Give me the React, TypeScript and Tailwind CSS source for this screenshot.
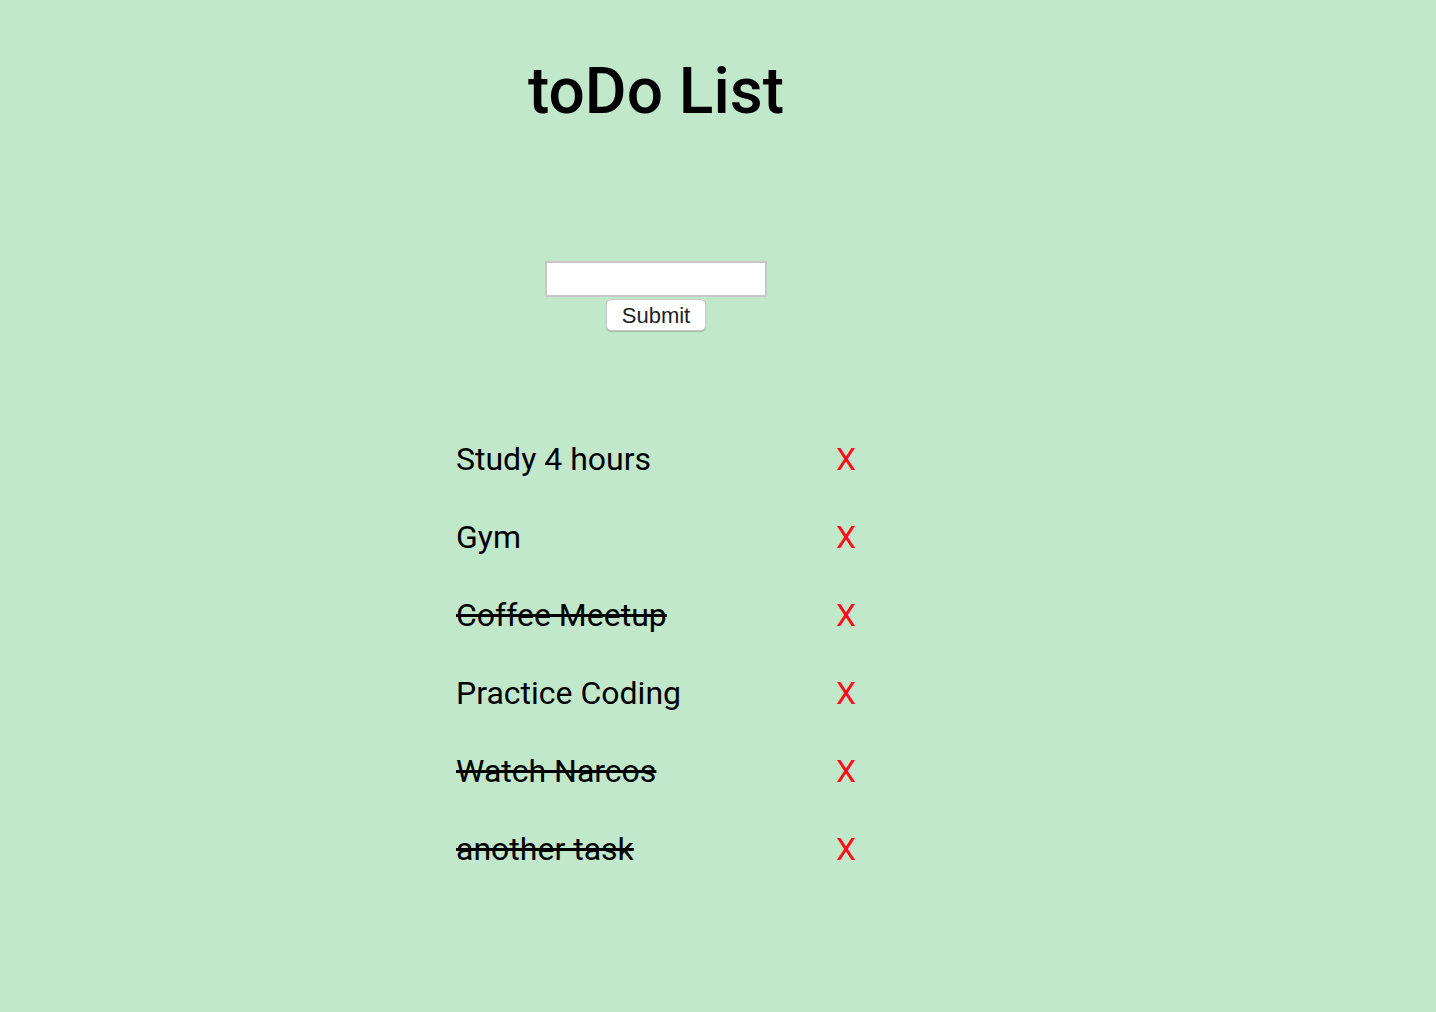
import { useState } from 'react';

type Todo = { id: number; text: string; done: boolean };

const initialTodos: Todo[] = [
  { id: 1, text: 'Study 4 hours', done: false },
  { id: 2, text: 'Gym', done: false },
  { id: 3, text: 'Coffee Meetup', done: true },
  { id: 4, text: 'Practice Coding', done: false },
  { id: 5, text: 'Watch Narcos', done: true },
  { id: 6, text: 'another task', done: true },
];

export default function App() {
  const [todos, setTodos] = useState<Todo[]>(initialTodos);
  const [value, setValue] = useState('');

  const addTodo = () => {
    if (!value.trim()) return;
    setTodos([...todos, { id: Date.now(), text: value, done: false }]);
    setValue('');
  };

  return (
    <div className="min-h-screen bg-[#c1e8cb] font-['Roboto',sans-serif] text-black">
      <div className="w-[1312px] flex flex-col items-center">
        <h1 className="mt-[52px] text-[64px] leading-[80px] font-medium">toDo List</h1>

        <div className="mt-[129px] flex flex-col items-center">
          <input
            value={value}
            onChange={(e) => setValue(e.target.value)}
            className="w-[222px] h-[36px] bg-white border-2 border-[#c8c8c8] outline-none px-1"
          />
          <button
            onClick={addTodo}
            className="mt-[2px] w-[100px] h-[32px] pt-[2px] bg-white rounded-[5px] border border-[#c9c9c9] shadow-[0_1px_1px_rgba(0,0,0,0.2)] font-['Liberation_Sans',sans-serif] text-[22px] leading-none text-[#222]"
          >
            Submit
          </button>
        </div>

        <ul className="mt-[89px] w-[400px]">
          {todos.map((todo) => (
            <li key={todo.id} className="flex items-center justify-between h-[78px] text-[32px]">
              <span
                onClick={() =>
                  setTodos(todos.map((t) => (t.id === todo.id ? { ...t, done: !t.done } : t)))
                }
                className={todo.done ? 'line-through cursor-pointer' : 'cursor-pointer'}
              >
                {todo.text}
              </span>
              <span
                onClick={() => setTodos(todos.filter((t) => t.id !== todo.id))}
                className="text-[#ff0d1a] cursor-pointer"
              >
                X
              </span>
            </li>
          ))}
        </ul>
      </div>
    </div>
  );
}
